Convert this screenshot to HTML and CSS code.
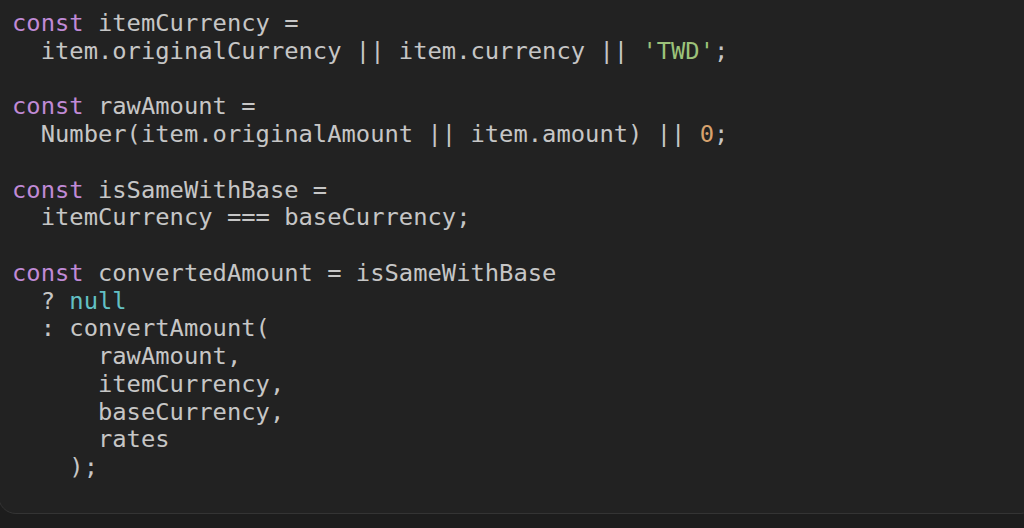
FILE: index.html
```html
<!DOCTYPE html>
<html>
<head>
<meta charset="utf-8">
<link rel="stylesheet" href="styles.css">
</head>
<body>
<div class="code-card">
<pre class="code"><span class="kw">const</span> itemCurrency =
  item.originalCurrency || item.currency || <span class="str">'TWD'</span>;

<span class="kw">const</span> rawAmount =
  Number(item.originalAmount || item.amount) || <span class="num">0</span>;

<span class="kw">const</span> isSameWithBase =
  itemCurrency === baseCurrency;

<span class="kw">const</span> convertedAmount = isSameWithBase
  ? <span class="lit">null</span>
  : convertAmount(
      rawAmount,
      itemCurrency,
      baseCurrency,
      rates
    );</pre>
</div>
</body>
</html>
```
FILE: styles.css
```css
html, body {
  margin: 0;
  padding: 0;
  background: #1d1d1d;
  width: 1024px;
  height: 528px;
  overflow: hidden;
}
.code-card {
  margin-left: -2px;
  margin-top: -20px;
  width: 1040px;
  height: 534px;
  box-sizing: border-box;
  background: #222222;
  border: 1px solid #343434;
  border-radius: 0 0 18px 18px;
  padding: 29px 0 0 13px;
}
.code {
  margin: 0;
  font-family: "DejaVu Sans Mono", "Liberation Mono", monospace;
  font-size: 23.8px;
  line-height: 27.75px;
  color: #c6c6c6;
  white-space: pre;
}
.kw { color: #c08ad6; }
.str { color: #9cc27a; }
.num { color: #d7a26e; }
.lit { color: #62c0c4; }
```
